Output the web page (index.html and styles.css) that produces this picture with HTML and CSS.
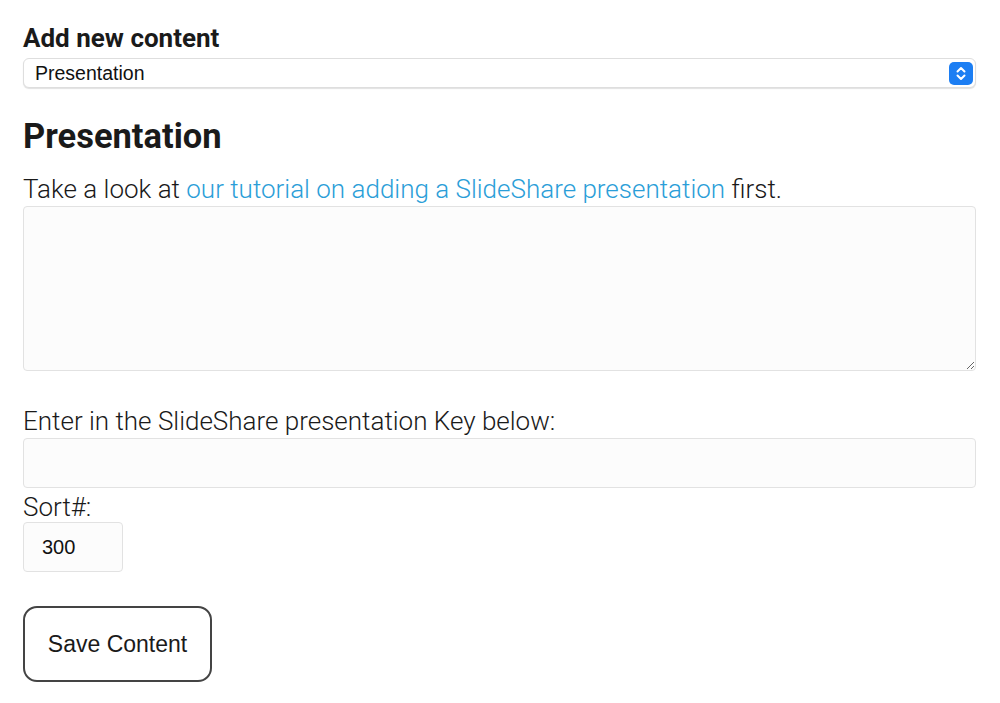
FILE: index.html
```html
<!DOCTYPE html>
<html lang="en">
<head>
    <meta charset="UTF-8">
    <meta name="viewport" content="width=device-width, initial-scale=1.0">
    <title>Add new content</title>
    <link rel="stylesheet" href="styles.css">
</head>
<body>
    <div class="container">
        <h1>Add new content</h1>

        <div class="select-wrap">
            <select name="type" id="content-type">
                <option value="presentation">Presentation</option>
                <option value="video">Video</option>
                <option value="text">Text</option>
            </select>
            <span class="select-arrows">
                <svg width="24" height="23" viewBox="0 0 24 23">
                    <rect width="24" height="23" rx="5" fill="#1c7ef3"/>
                    <path d="M8.5 9.5 L12 6 L15.5 9.5" fill="none" stroke="#fff" stroke-width="2" stroke-linecap="round" stroke-linejoin="round"/>
                    <path d="M8.5 13.5 L12 17 L15.5 13.5" fill="none" stroke="#fff" stroke-width="2" stroke-linecap="round" stroke-linejoin="round"/>
                </svg>
            </span>
        </div>

        <form id="content-form" class="form-section">
            <h2>Presentation</h2>
            <p class="intro">Take a look at <a href="#">our tutorial on adding a SlideShare presentation</a> first.</p>
            <textarea name="description" id="description"></textarea>

            <label for="slide-key" class="key-label">Enter in the SlideShare presentation Key below:</label>
            <input type="text" name="key" id="slide-key">

            <label for="sort">Sort#:</label>
            <input type="text" name="sort" id="sort" class="sort-input" value="300">

            <button type="submit">Save Content</button>
        </form>
    </div>
</body>
</html>
```

FILE: styles.css
```css
body {
    margin: 0;
    font-family: Roboto, 'Liberation Sans', Arial, sans-serif;
    color: #1a1a1a;
    background-color: #fff;
}

.container {
    padding: 23px 24px 0 23px;
}

h1 {
    margin: 0 0 5px;
    font-size: 26px;
    line-height: 30px;
    font-weight: 700;
}

.select-wrap {
    position: relative;
}

select {
    display: block;
    width: 100%;
    height: 30px;
    padding: 0 11px;
    appearance: none;
    -webkit-appearance: none;
    border: 1px solid #dedede;
    border-radius: 6px;
    box-shadow: 0 1px 1px rgba(0, 0, 0, 0.12);
    background-color: #fff;
    font-family: 'Liberation Sans', Arial, sans-serif;
    font-size: 19.5px;
    color: #111;
}

.select-arrows {
    position: absolute;
    top: 4px;
    right: 3px;
    height: 23px;
    pointer-events: none;
}

h2 {
    margin: 29px 0 0;
    font-size: 34.5px;
    line-height: 38px;
    font-weight: 700;
}

.intro,
label {
    display: block;
    margin: 0;
    font-size: 26px;
    line-height: 30px;
    font-weight: 300;
}

.intro {
    margin-top: 19px;
}

a {
    color: #2b9ed8;
    text-decoration: none;
}

textarea,
input[type="text"] {
    display: block;
    box-sizing: border-box;
    width: 100%;
    border: 1px solid #e2e2e2;
    border-radius: 4px;
    background-color: #fcfcfc;
    font-family: 'Liberation Sans', Arial, sans-serif;
    font-size: 20px;
    color: #111;
}

textarea {
    height: 165px;
    margin-top: 2px;
}

.key-label {
    margin-top: 35px;
}

input[type="text"] {
    height: 50px;
    margin-top: 2px;
    padding: 0 18px;
}

input[type="text"] + label {
    margin-top: 4px;
}

.sort-input {
    width: 100px !important;
    margin-top: 0 !important;
}

button {
    display: block;
    margin-top: 34px;
    width: 189px;
    height: 76px;
    border: 2px solid #444;
    border-radius: 14px;
    background-color: #fff;
    font-family: 'Liberation Sans', Arial, sans-serif;
    font-size: 23px;
    color: #1a1a1a;
    cursor: pointer;
}
```
